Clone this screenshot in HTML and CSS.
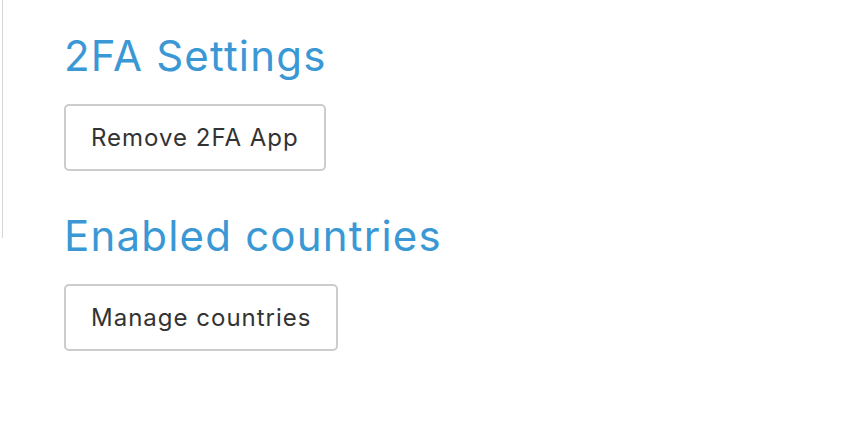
FILE: index.html
```html
<!DOCTYPE html>
<html>
<head>
<meta charset="utf-8">
<link rel="stylesheet" href="styles.css">
</head>
<body>
<div class="page">
  <div class="rail"></div>
  <main class="content">
    <h2 class="title">2FA Settings</h2>
    <button class="btn">Remove 2FA App</button>
    <h2 class="title title-second">Enabled countries</h2>
    <button class="btn">Manage countries</button>
  </main>
</div>
</body>
</html>
```
FILE: styles.css
```css
html, body {
  margin: 0;
  padding: 0;
  background: #ffffff;
}
body {
  font-family: Inter, Lato, "Liberation Sans", sans-serif;
  color: #333333;
}
.page {
  display: flex;
  align-items: flex-start;
}
.rail {
  width: 2px;
  height: 238px;
  border-right: 1px solid #d6d6d6;
  flex: none;
}
.content {
  display: flex;
  flex-direction: column;
  align-items: flex-start;
  padding: 28px 0 0 61px;
}
.title {
  margin: 0;
  font-weight: 400;
  font-size: 42px;
  letter-spacing: 1.2px;
  line-height: 56px;
  color: #3a98d5;
}
.title-second {
  margin-top: 37px;
}
.btn {
  margin-top: 20px;
  font-family: inherit;
  font-size: 24px;
  letter-spacing: 1px;
  color: #333333;
  background: #ffffff;
  border: 2px solid #cccccc;
  border-radius: 5px;
  height: 67px;
  padding: 0 25px;
  cursor: pointer;
}
```
